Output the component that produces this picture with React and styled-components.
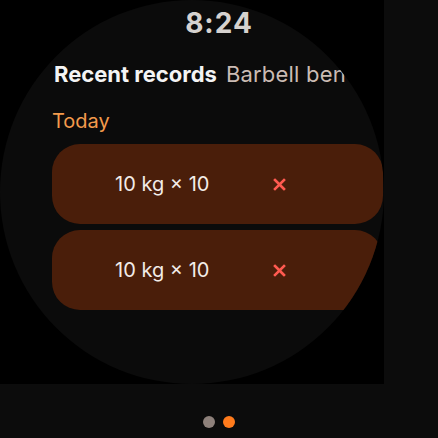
import React from "react";
import styled, { createGlobalStyle } from "styled-components";

const GlobalStyle = createGlobalStyle`
  html, body {
    margin: 0;
    padding: 0;
    background: #0c0c0c;
  }
  body {
    font-family: "Inter", "Roboto", sans-serif;
  }
`;

const Page = styled.div`
  position: relative;
  width: 438px;
  height: 438px;
  display: flex;
  flex-direction: column;
  background: #0c0c0c;
  overflow: hidden;
`;

const Screen = styled.div`
  width: 384px;
  height: 384px;
  background: #000;
  flex-shrink: 0;
`;

const Round = styled.div`
  width: 384px;
  height: 384px;
  border-radius: 50%;
  background: #0b0b0b;
  overflow: hidden;
  display: flex;
  flex-direction: column;
  padding: 59px 0 0 54px;
  box-sizing: border-box;
`;

const Time = styled.div`
  position: absolute;
  top: 6px;
  left: 0;
  right: 0;
  text-align: center;
  color: #d6d2cf;
  font-size: 28px;
  font-weight: 700;
  letter-spacing: 1px;
`;

const TitleRow = styled.div`
  display: flex;
  align-items: baseline;
  gap: 9px;
  white-space: nowrap;
  font-size: 22px;
  line-height: 30px;
`;

const TitleText = styled.span`
  color: #f4f4f4;
  font-weight: 700;
`;

const SubText = styled.span`
  color: #cbbcb4;
  font-weight: 400;
  letter-spacing: 0.2px;
`;

const Section = styled.div`
  margin-top: 19px;
  margin-left: -2px;
  color: #f39a4c;
  font-size: 20px;
  line-height: 26px;
`;

const List = styled.div`
  margin-top: 10px;
  margin-left: -2px;
  display: flex;
  flex-direction: column;
  gap: 6px;
`;

const Card = styled.div`
  width: 331px;
  height: 80px;
  border-radius: 28px;
  background: #4a1e0a;
  display: flex;
  align-items: center;
  padding-left: 63px;
  box-sizing: border-box;
  flex-shrink: 0;
`;

const SetText = styled.span`
  color: #f2ece8;
  font-size: 20px;
  width: 158px;
`;

const Remove = styled.svg`
  width: 13px;
  height: 13px;
  flex-shrink: 0;
`;

const Footer = styled.div`
  flex: 1;
  display: flex;
  justify-content: center;
  align-items: center;
  gap: 8px;
  padding-top: 22px;
`;

const Dot = styled.div`
  width: 12px;
  height: 12px;
  border-radius: 50%;
  background: ${(props) => (props.active ? "#ff7b1c" : "#8e817b")};
`;

const records = [
  { id: 1, weight: 10, reps: 10 },
  { id: 2, weight: 10, reps: 10 },
];

const App = () => {
  return (
    <Page>
      <GlobalStyle />
      <Screen>
        <Round>
          <TitleRow>
            <TitleText>Recent records</TitleText>
            <SubText>Barbell ben</SubText>
          </TitleRow>
          <Section>Today</Section>
          <List>
            {records.map((r) => (
              <Card key={r.id}>
                <SetText>
                  {r.weight} kg × {r.reps}
                </SetText>
                <Remove viewBox="0 0 13 13">
                  <path
                    d="M2 2 L11 11 M11 2 L2 11"
                    stroke="#ff5a50"
                    strokeWidth="2.6"
                    strokeLinecap="square"
                  />
                </Remove>
              </Card>
            ))}
          </List>
        </Round>
      </Screen>
      <Footer>
        <Dot />
        <Dot active />
      </Footer>
      <Time>8:24</Time>
    </Page>
  );
};

export default App;
